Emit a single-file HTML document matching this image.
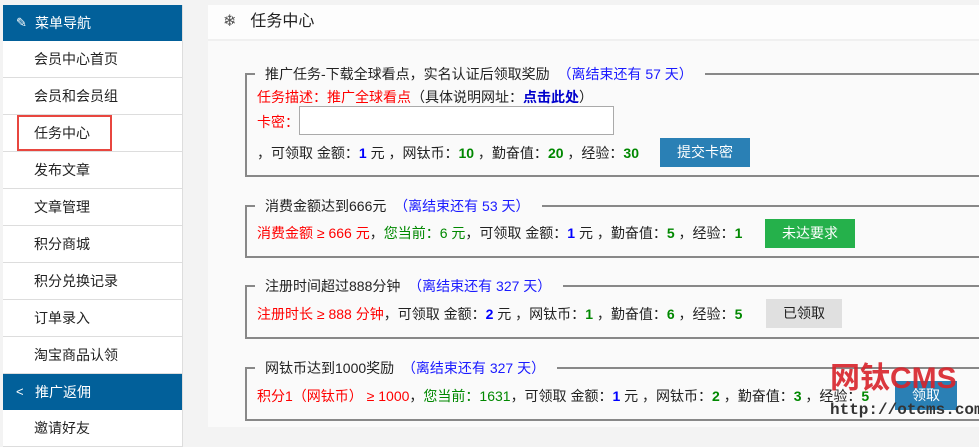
<!DOCTYPE html>
<html><head><meta charset="utf-8"><style>
*{margin:0;padding:0;box-sizing:border-box}
body{width:979px;height:427px;overflow:hidden;background:#f3f3f3;font-family:"Liberation Sans","Noto Sans CJK SC",sans-serif;font-size:14px;color:#222;position:relative}
.side{position:absolute;left:3px;top:5px;width:180px;background:#fff;border-right:1px solid #ddd}
.hd{height:36px;background:#02609a;color:#fff;font-size:14px;line-height:36px;padding-left:32px;position:relative}
.hd i{position:absolute;left:13px;top:0;font-style:normal;font-size:13px}
.it{height:37px;line-height:36px;padding-left:31px;border-bottom:1px solid #ddd;font-size:14px;color:#222}
.redbox{position:absolute;left:17px;top:115px;width:95px;height:36px;border:2px solid #e8463f}
.main{position:absolute;left:208px;top:5px;width:771px;height:422px;background:#fafafa}
.tt{height:36px;background:#fdfdfd;font-size:16px;line-height:34px;padding-left:15px;border-bottom:2px solid #f0f0f0}
.tt b{font-weight:normal;color:#555;margin-right:14px}
.fs{position:absolute;left:37px;width:760px;border:2px solid #888;border-right:none}
.lg{position:absolute;top:-10px;left:8px;background:#fafafa;padding:0 12px 0 10px;line-height:18px;font-size:14px}
.bl{color:#1a1aff}.r{color:#f00}.g{color:#080}.nb{font-weight:bold;color:#00f}.ng{font-weight:bold;color:#080}
.row{position:absolute;left:10px;white-space:nowrap;line-height:18px}
.btn{position:absolute;color:#fff;text-align:center;font-size:14px}
</style></head><body>
<div class="side">
<div class="hd"><i>✎</i>菜单导航</div>
<div class="it">会员中心首页</div>
<div class="it">会员和会员组</div>
<div class="it">任务中心</div>
<div class="it">发布文章</div>
<div class="it">文章管理</div>
<div class="it">积分商城</div>
<div class="it">积分兑换记录</div>
<div class="it">订单录入</div>
<div class="it">淘宝商品认领</div>
<div class="hd"><i>&lt;</i>推广返佣</div>
<div class="it">邀请好友</div>
</div>
<div class="redbox"></div>
<div class="main">
<div class="tt"><b>❄</b>任务中心</div>
<div class="fs" style="top:68px;height:104px">
<div class="lg">推广任务-下载全球看点，实名认证后领取奖励 <span class="bl">&nbsp;（离结束还有 57 天）</span></div>
<div class="row r" style="top:13px">任务描述：推广全球看点<span style="color:#222">（具体说明网址：</span><b style="color:#00c">点击此处</b><span style="color:#222">）</span></div>
<div class="row r" style="top:38px">卡密：</div>
<div style="position:absolute;left:52px;top:31px;width:315px;height:29px;border:1px solid #aaa;background:#fff"></div>
<div class="row" style="top:69px">，可领取 金额：<span class="nb">1</span> 元 ，网钛币：<span class="ng">10</span> ，勤奋值：<span class="ng">20</span> ，经验：<span class="ng">30</span></div>
<div class="btn" style="left:413px;top:63px;width:90px;height:29px;line-height:29px;background:#2a80b5">提交卡密</div>
</div>
<div class="fs" style="top:200px;height:53px">
<div class="lg">消费金额达到666元 <span class="bl">&nbsp;（离结束还有 53 天）</span></div>
<div class="row" style="top:17px"><span class="r">消费金额 ≥ 666 元</span>，<span class="g">您当前：6 元</span>，可领取 金额：<span class="nb">1</span> 元 ，勤奋值：<span class="ng">5</span> ，经验：<span class="ng">1</span></div>
<div class="btn" style="left:518px;top:12px;width:90px;height:29px;line-height:29px;background:#25b14b">未达要求</div>
</div>
<div class="fs" style="top:280px;height:54px">
<div class="lg">注册时间超过888分钟 <span class="bl">&nbsp;（离结束还有 327 天）</span></div>
<div class="row" style="top:18px"><span class="r">注册时长 ≥ 888 分钟</span>，可领取 金额：<span class="nb">2</span> 元 ，网钛币：<span class="ng">1</span> ，勤奋值：<span class="ng">6</span> ，经验：<span class="ng">5</span></div>
<div class="btn" style="left:519px;top:12px;width:76px;height:29px;line-height:29px;background:#e0e0e0;color:#222">已领取</div>
</div>
<div class="fs" style="top:362px;height:54px">
<div class="lg">网钛币达到1000奖励 <span class="bl">&nbsp;（离结束还有 327 天）</span></div>
<div class="row" style="top:18px"><span class="r">积分1（网钛币） ≥ 1000</span>，<span class="g">您当前：1631</span>，可领取 金额：<span class="nb">1</span> 元 ，网钛币：<span class="ng">2</span> ，勤奋值：<span class="ng">3</span> ，经验：<span class="ng">5</span></div>
<div class="btn" style="left:648px;top:12px;width:62px;height:29px;line-height:29px;background:#2a80b5">领取</div>
</div>
</div>
<div style="position:absolute;left:830px;top:362px;color:#d8232a;font-size:30px;font-weight:bold;line-height:34px;opacity:.9">网钛CMS</div>
<div style="position:absolute;left:830px;top:401px;color:#333;font-size:16px;font-weight:bold;font-family:'Liberation Mono',monospace;line-height:18px">http://otcms.com</div>
</body></html>
